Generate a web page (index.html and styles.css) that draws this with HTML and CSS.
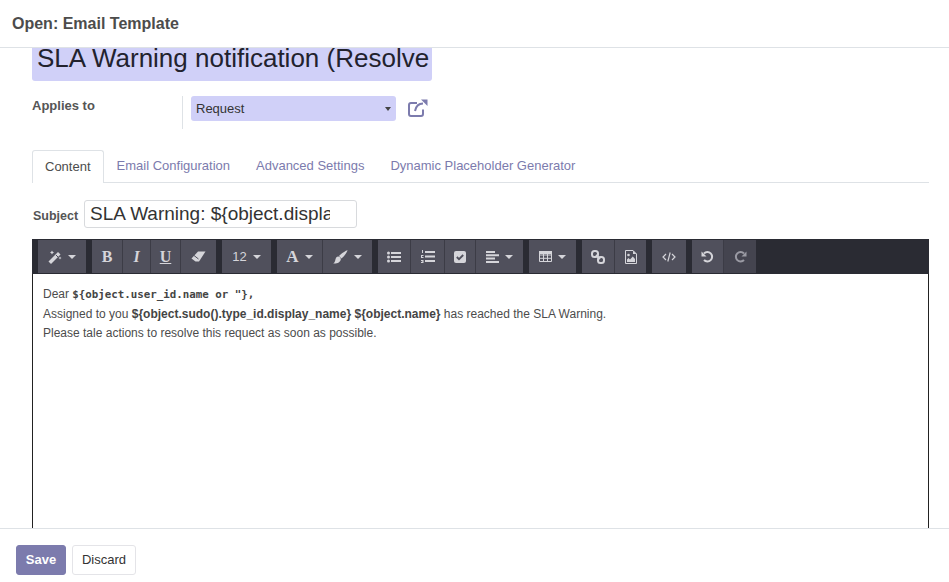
FILE: index.html
```html
<!DOCTYPE html>
<html lang="en">
<head>
  <meta charset="UTF-8">
  <title>Open: Email Template</title>
  <link rel="stylesheet" href="styles.css">
</head>
<body>

<div class="dialog">
  <header class="dialog-header">Open: Email Template</header>

  <main class="dialog-body">
    <input class="title-input" type="text" value="SLA Warning notification (Resolved)">

    <div class="applies">
      <div class="applies-label">Applies to</div>
      <div class="applies-field">
        <div class="select">Request<span class="caret caret-dark"></span></div>
        <svg class="ext-link" width="20" height="18" viewBox="0 0 20 18" fill="none" stroke="#7c7bad" stroke-width="2">
          <path d="M15 10.500V15a2 2 0 0 1-2 2H3a2 2 0 0 1-2-2V6a2 2 0 0 1 2-2h6"/>
          <path d="M7 12C8 7 11 4.500 15 4.500"/>
          <path d="M13 0.500h6.500V7z" fill="#7c7bad" stroke="none"/>
        </svg>
      </div>
    </div>

    <ul class="tabs">
      <li class="tab active">Content</li>
      <li class="tab">Email Configuration</li>
      <li class="tab">Advanced Settings</li>
      <li class="tab">Dynamic Placeholder Generator</li>
    </ul>

    <div class="subject">
      <label>Subject</label>
      <input class="subject-input" type="text" value="SLA Warning: ${object.display_name}">
    </div>

    <div class="toolbar">
      <div class="tb-group">
        <div class="tb-btn w48">
          <svg width="14" height="14" viewBox="0 0 14 14" fill="#d5d5da"><path d="M.5 11.500 10 2l2.500 2.500-9.500 9.500z"/><path d="M4 .5l.7 1.300L6 2.500l-1.300.7L4 4.500l-.7-1.300L2 2.500l1.300-.7zM12 6.500l.5 1 1 .5-1 .5-.5 1-.5-1-1-.5 1-.5z"/><path d="M8 5l2 2" stroke="#50505c"/></svg>
          <span class="caret"></span>
        </div>
      </div>
      <div class="tb-group">
        <div class="tb-btn w31 glyph">B</div>
        <div class="tb-btn w28 glyph italic">I</div>
        <div class="tb-btn w30 glyph underline">U</div>
        <div class="tb-btn w35">
          <svg width="15" height="11" viewBox="0 0 15 11"><path d="M4.500 10.500 .5 7.500 7 .5h7.500L8 10.500z" fill="#d5d5da"/><path d="M3 4.500l4.500 3.500" stroke="#50505c"/></svg>
        </div>
      </div>
      <div class="tb-group">
        <div class="tb-btn w49 size">12<span class="caret"></span></div>
      </div>
      <div class="tb-group">
        <div class="tb-btn w46 glyph letter">A<span class="caret"></span></div>
        <div class="tb-btn w49">
          <svg width="15" height="14" viewBox="0 0 15 14" fill="#d5d5da"><path d="M14.500.2c.5.500-3 6-6 8.300L6 6C8.500 3.200 14 -.3 14.500.2z"/><path d="M5.200 6.500c1.800.2 2.800 1.400 2.600 3C7.500 12 4 14 .2 13.500c1.700-1 1.700-2.200 2.300-4.300.4-1.400 1.300-2.800 2.700-2.700z"/></svg>
          <span class="caret"></span>
        </div>
      </div>
      <div class="tb-group">
        <div class="tb-btn w33">
          <svg width="14" height="12" viewBox="0 0 14 12" fill="#d5d5da"><circle cx="1.500" cy="2" r="1.500"/><circle cx="1.500" cy="6" r="1.500"/><circle cx="1.500" cy="10" r="1.500"/><path d="M4 1h10v2H4zM4 5h10v2H4zM4 9h10v2H4z"/></svg>
        </div>
        <div class="tb-btn w34">
          <svg width="14" height="13" viewBox="0 0 14 13" fill="#d5d5da"><path d="M1 0h1v3H1zM0 5h2.500v1H1v1h1.500v1H0zM0 10h2.500v3H0v-1h1.500v-.5H.8v-.5h.7V11H0z"/><path d="M4 1h10v2H4zM4 5.500h10v2H4zM4 10h10v2H4z"/></svg>
        </div>
        <div class="tb-btn w31">
          <svg width="12" height="12" viewBox="0 0 12 12"><rect width="12" height="12" rx="2" fill="#d5d5da"/><path d="M2.800 6 5 8.200 9.200 4" fill="none" stroke="#50505c" stroke-width="1.800"/></svg>
        </div>
        <div class="tb-btn w47">
          <svg width="13" height="12" viewBox="0 0 13 12" fill="#d5d5da"><path d="M0 0h9v2H0zM0 3.300h13v2H0zM0 6.600h9v2H0zM0 10h13v2H0z"/></svg>
          <span class="caret"></span>
        </div>
      </div>
      <div class="tb-group">
        <div class="tb-btn w47">
          <svg width="13" height="11" viewBox="0 0 13 11" fill="none" stroke="#d5d5da"><path d="M.500.500h12v10H.500zM.500 4h12M.500 7.300h12M4.500.500v10M8.500.500v10"/><path d="M0 0h13v3H0z" fill="#d5d5da" stroke="none"/></svg>
          <span class="caret"></span>
        </div>
      </div>
      <div class="tb-group">
        <div class="tb-btn w33">
          <svg width="14" height="14" viewBox="0 0 14 14" fill="none" stroke="#d5d5da" stroke-width="2"><rect x="1" y="1" width="6" height="6" rx="2.500"/><rect x="7" y="7" width="6" height="6" rx="2.500"/><path d="M5 5l4 4"/></svg>
        </div>
        <div class="tb-btn w31">
          <svg width="12" height="14" viewBox="0 0 12 14"><path d="M.500.500h7.500l3.500 3.500v9.500H.500z" fill="none" stroke="#d5d5da"/><path d="M8 .500V4h3.500z" fill="#d5d5da"/><circle cx="3.500" cy="5" r="1.300" fill="#d5d5da"/><path d="M2 12V9.500l1.500-1.500 1.500 1.500 2.800-3L10 9v3z" fill="#d5d5da"/></svg>
        </div>
      </div>
      <div class="tb-group">
        <div class="tb-btn w34">
          <svg width="14" height="12" viewBox="0 0 14 12" fill="none" stroke="#d5d5da" stroke-width="1.200"><path d="M4 3 1 6l3 3M10 3l3 3-3 3M8.200 1.500 5.800 10.500"/></svg>
        </div>
      </div>
      <div class="tb-group">
        <div class="tb-btn w32">
          <svg width="13" height="13" viewBox="0 0 13 13" fill="none"><path d="M3 3.500A4.700 4.700 0 1 1 3 10" stroke="#d5d5da" stroke-width="2"/><path d="M.500 1.500v5h5z" fill="#d5d5da"/></svg>
        </div>
        <div class="tb-btn w32 off">
          <svg width="13" height="13" viewBox="0 0 13 13" fill="none"><path d="M10 3.500a4.700 4.700 0 1 0 0 6.500" stroke="#9a9aa3" stroke-width="2"/><path d="M12.500 1.500v5h-5z" fill="#9a9aa3"/></svg>
        </div>
      </div>
    </div>

    <div class="editor">
      <p>Dear <b class="mono">${object.user_id.name or "},</b></p>
      <p>Assigned to you <b>${object.sudo().type_id.display_name} ${object.name}</b> has reached the SLA Warning.</p>
      <p>Please tale actions to resolve this requect as soon as possible.</p>
    </div>
  </main>

  <footer class="dialog-footer">
    <button class="btn btn-primary">Save</button>
    <button class="btn">Discard</button>
  </footer>
</div>

</body>
</html>
```

FILE: styles.css
```css
html, body {
  margin: 0;
  height: 100%;
}

body {
  font-family: "Liberation Sans", Arial, sans-serif;
  font-size: 12px;
  color: #4c4c4c;
  background: #fff;
}

.dialog {
  display: flex;
  flex-direction: column;
  height: 582px;
  overflow: hidden;
}

.dialog-header {
  height: 47px;
  line-height: 47px;
  padding-left: 12px;
  font-size: 16px;
  font-weight: bold;
  color: #4c4c4c;
  border-bottom: 1px solid #dee2e6;
  flex: none;
}

.dialog-body {
  flex: 1;
  min-height: 0;
  overflow: hidden;
  padding: 0 20px 0 32px;
}

.title-input {
  display: block;
  width: 400px;
  height: 44px;
  margin-top: -11px;
  box-sizing: border-box;
  padding: 0 3px 2px 5px;
  border: none;
  background: #d0d0f8;
  border-radius: 3px;
  font-family: inherit;
  font-size: 26px;
  color: #22222e;
}

.applies {
  display: flex;
  margin-top: 15px;
}

.applies-label {
  width: 150px;
  padding-top: 1px;
  font-size: 13px;
  line-height: 18px;
  font-weight: bold;
  color: #555;
}

.applies-field {
  display: flex;
  align-items: flex-start;
  height: 33px;
  padding-left: 8px;
  border-left: 1px solid #dee2e6;
}

.select {
  display: flex;
  align-items: center;
  justify-content: space-between;
  width: 205px;
  height: 25px;
  box-sizing: border-box;
  padding: 0 5px;
  background: #d0d0f8;
  border-radius: 3px;
  font-size: 13px;
  color: #333;
}

.ext-link {
  margin: 3px 0 0 12px;
}

.caret {
  display: inline-block;
  width: 0;
  height: 0;
  margin-left: 6px;
  border-left: 4px solid transparent;
  border-right: 4px solid transparent;
  border-top: 4px solid #d5d5da;
}

.caret-dark {
  border-top-color: #444;
  border-left-width: 3.500px;
  border-right-width: 3.500px;
}

.tabs {
  display: flex;
  list-style: none;
  margin: 21px 0 0;
  padding: 0;
  height: 32px;
  border-bottom: 1px solid #dee2e6;
}

.tab {
  padding: 0 13px;
  line-height: 32px;
  font-size: 13px;
  color: #7c7bad;
  height: 32px;
}

.tab.active {
  height: 33px;
  box-sizing: border-box;
  background: #fff;
  color: #4c4c4c;
  border: 1px solid #dee2e6;
  border-bottom: none;
  border-radius: 3px 3px 0 0;
  padding: 0 12px;
  line-height: 31px;
}

.subject {
  display: flex;
  align-items: center;
  margin-top: 17px;
}

.subject label {
  width: 52px;
  padding: 3px 0 0 1px;
  box-sizing: border-box;
  font-size: 12.500px;
  font-weight: bold;
  color: #555;
}

.subject-input {
  width: 273px;
  height: 28px;
  box-sizing: border-box;
  padding: 0 26px 0 5px;
  border: 1px solid #d8dadd;
  border-radius: 3px;
  font-family: inherit;
  font-size: 19px;
  color: #333;
}

.toolbar {
  display: flex;
  gap: 6px;
  height: 35px;
  margin-top: 11px;
  padding: 1px 6px;
  box-sizing: border-box;
  background: #2a2b33;
}

.tb-group {
  display: flex;
}

.tb-btn {
  display: flex;
  align-items: center;
  justify-content: center;
  height: 33px;
  box-sizing: border-box;
  background: #50505c;
  border-right: 1px solid #3c3c46;
  color: #d5d5da;
}

.tb-group .tb-btn:last-child {
  border-right: none;
}

.tb-btn.off {
  background: #44444f;
}

.w28 { width: 28px; }
.w30 { width: 30px; }
.w31 { width: 31px; }
.w32 { width: 32px; }
.w33 { width: 33px; }
.w34 { width: 34px; }
.w35 { width: 35px; }
.w46 { width: 46px; }
.w47 { width: 47px; }
.w48 { width: 48px; }
.w49 { width: 49px; }

.glyph {
  font-family: "Liberation Serif", "Times New Roman", serif;
  font-weight: bold;
  font-size: 16px;
}

.italic {
  font-style: italic;
}

.underline {
  text-decoration: underline;
}

.size {
  font-size: 13px;
}

.letter {
  font-size: 17px;
}

.editor {
  height: 260px;
  box-sizing: border-box;
  padding: 11px 10px 0;
  border: 1px solid #222;
  border-top: none;
  font-size: 12px;
  color: #4c4c4c;
}

.editor p {
  margin: 0;
  line-height: 19.500px;
}

.editor b {
  color: #444;
}

.mono {
  font-family: "DejaVu Sans Mono", monospace;
  font-size: 10.800px;
}

.dialog-footer {
  flex: none;
  height: 54px;
  box-sizing: border-box;
  display: flex;
  align-items: flex-start;
  gap: 6px;
  padding: 16px 0 0 16px;
  border-top: 1px solid #dee2e6;
}

.btn {
  height: 30px;
  padding: 0 0 2px;
  width: 64px;
  font-family: inherit;
  font-size: 13px;
  color: #333;
  background: #fff;
  border: 1px solid #e4e4e8;
  border-radius: 3px;
}

.btn-primary {
  width: 50px;
  background: #7c7bad;
  border-color: #7c7bad;
  color: #fff;
  font-weight: bold;
}
```
